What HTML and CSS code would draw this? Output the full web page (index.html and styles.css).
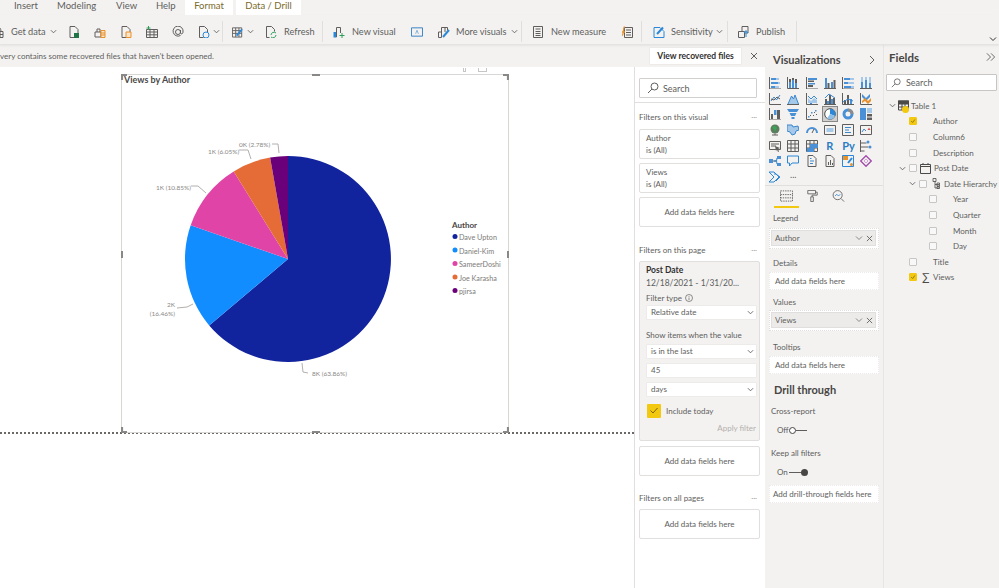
FILE: index.html
```html
<!DOCTYPE html>
<html lang="en">
<head>
<meta charset="utf-8">
<title>Power BI Desktop</title>
<link rel="stylesheet" href="styles.css">
</head>
<body>
<svg class="defs" aria-hidden="true">
  <symbol id="chev" viewBox="0 0 8 8"><path d="M1 2.5 4 5.5 7 2.5" fill="none" stroke="currentColor" stroke-width="1"/></symbol>
  <symbol id="x" viewBox="0 0 8 8"><path d="M1 1 7 7M7 1 1 7" fill="none" stroke="currentColor" stroke-width="1"/></symbol>
  <symbol id="search" viewBox="0 0 12 12"><circle cx="7.5" cy="4.5" r="3.5" fill="none" stroke="currentColor"/><path d="M5 7 1 11" stroke="currentColor" fill="none"/></symbol>
</svg>
<div class="app">
  <nav class="tabs">
    <span class="tab t-insert">Insert</span>
    <span class="tab t-model">Modeling</span>
    <span class="tab t-view">View</span>
    <span class="tab t-help">Help</span>
    <span class="tab active t-format">Format</span>
    <span class="tab active t-drill">Data / Drill</span>
  </nav>
  <div class="toolbar">
    <div class="tgroup g1">
      <svg class="ti" viewBox="0 0 12 12"><path class="g" d="M1 5.5h10v6H1zM1 8.5h10M4.500 5.500v6M8 5.500v6M3 5.500c0-6 6-6 6 0"/></svg>
      <span class="tl w-get">Get data</span>
      <svg class="tc"><use href="#chev"/></svg>
      <div class="iconrow">
        <svg class="ti" viewBox="0 0 12 12"><path class="g" d="M2 .5h5l3 3v8H2z"/><rect x="6" y="7" width="5" height="5" fill="#217346"/></svg>
        <svg class="ti" viewBox="0 0 12 12"><path class="g" d="M1 6h6v5H1zM3 6V3h3v3"/><path class="o" d="M7 4.500h4v7H7zM7 7h4M7 9h4"/></svg>
        <svg class="ti" viewBox="0 0 12 12"><path class="g" d="M2 .5h5l3 3v8H2z"/><path class="o" d="M6 6h5v5.500H6z"/></svg>
        <svg class="ti" viewBox="0 0 12 12"><path class="g" d="M.500 3.500h11v8H.500zM.500 6h11M.500 8.800h11M4 3.500v8M8 3.500v8"/><path d="M2.500 0v4M.500 2h4" stroke="#2f9e5b" fill="none"/></svg>
        <svg class="ti" viewBox="0 0 12 12"><path class="g" d="M8.500 9.500A5 5 0 1 1 11 6c0 2-2 2.500-2.500 1V4M8.500 6A2.500 2.500 0 1 1 3.500 6 2.500 2.500 0 0 1 8.500 6"/></svg>
        <svg class="ti" viewBox="0 0 12 12"><path class="g" d="M1.500.5h5l3 3v3M1.500.5v11h4"/><circle cx="8" cy="9" r="3" fill="none" stroke="#2b88d8"/></svg>
      </div>
      <svg class="tc c-a"><use href="#chev"/></svg>
    </div>
    <div class="tgroup g2">
      <svg class="ti" viewBox="0 0 13 12"><path class="g" d="M.5 1.500h10v10H.5zM.5 4.500h10M.5 7.500h10M4 1.500v10M7.500 1.500v10"/><path d="M5 10 11 3" stroke="#2b88d8" stroke-width="2" fill="none"/></svg>
      <svg class="tc c-b"><use href="#chev"/></svg>
      <svg class="ti refresh" viewBox="0 0 12 12"><path class="g" d="M1.500.5h5l3 3v2M1.500.5v11h3"/><path d="M6 9a3 3 0 0 1 5-2M11 9a3 3 0 0 1-5 2" stroke="#2f9e5b" fill="none"/></svg>
      <span class="tl w-ref">Refresh</span>
    </div>
    <div class="tgroup g3">
      <svg class="ti" viewBox="0 0 12 12"><path d="M.5 6h3v5.500h-3z" fill="#2b88d8"/><path class="g" d="M3.500 11V1.500h4V7"/><path d="M9 7v5M6.500 9.500h5" stroke="#2f9e5b" fill="none"/></svg>
      <span class="tl w-nv">New visual</span>
      <svg class="ti i-tb" viewBox="0 0 13 10"><path d="M.5.500h12v9H.5z" fill="none" stroke="#2b7cc4"/><path d="M5 7 6.500 3 8 7" fill="none" stroke="#7fb2dc"/></svg>
      <svg class="ti i-mv" viewBox="0 0 12 12"><path class="g" d="M.5 6h3v5.500h-3zM3.500 6V1.500h3.500V6M7 1.500h2.500v3"/><path d="M5 11 11 4" stroke="#2b88d8" stroke-width="2" fill="none"/></svg>
      <span class="tl w-mv">More visuals</span>
      <svg class="tc c-c"><use href="#chev"/></svg>
    </div>
    <div class="tgroup g4">
      <svg class="ti" viewBox="0 0 12 12"><path class="g" d="M1.500.5h9v11h-9zM3.500 3h5M3.500 5.500h5M3.500 7.500h5M3.500 9.500h5"/></svg>
      <span class="tl w-nm">New measure</span>
      <svg class="ti i-qm" viewBox="0 0 12 12"><path class="g" d="M3.500 1.500h8v10h-8zM5 4h5M5 6.500h5M5 9h5"/><path d="M1 6h3M3.500.5C2 1 3 9 1 9.500" stroke="#e8912d" stroke-width="1.300" fill="none"/></svg>
    </div>
    <div class="tgroup g5">
      <svg class="ti" viewBox="0 0 12 12"><path d="M1 1.500h6l4 4v6H1z" fill="none" stroke="#2b88d8"/><path d="M4 8 10 1.500" stroke="#2b88d8" stroke-width="2" fill="none"/></svg>
      <span class="tl w-sens">Sensitivity</span>
      <svg class="tc c-d"><use href="#chev"/></svg>
    </div>
    <div class="tgroup g6">
      <svg class="ti" viewBox="0 0 12 12"><path class="g" d="M.5 5.500h6v6h-6zM4 5.500V.5h6v6.500H7"/><path d="M8 11V5M6 7l2-2.500L10 7" stroke="#2b88d8" fill="none"/></svg>
      <span class="tl w-pub">Publish</span>
    </div>
    <svg class="collapse"><use href="#chev"/></svg>
  </div>
  <div class="main">
    <div class="work">
      <div class="notice">
        <span class="notice-text">very contains some recovered files that haven't been opened.</span>
        <button class="notice-btn">View recovered files</button>
        <svg class="notice-x"><use href="#x"/></svg>
      </div>
      <div class="work-body">
        <section class="canvas">
          <div class="page">
            <div class="visual">
              <svg class="chart" viewBox="121 74 388 359" role="img">
                <path d="M288 156A103 103 0 1 1 209.200 325.400L288 259Z" fill="#12239e"/>
                <path d="M209.200 325.400A103 103 0 0 1 190.700 225.200L288 259Z" fill="#118dff"/>
                <path d="M190.700 225.200A103 103 0 0 1 233.700 171.500L288 259Z" fill="#e044a7"/>
                <path d="M233.700 171.500A103 103 0 0 1 270.100 157.600L288 259Z" fill="#e66c37"/>
                <path d="M270.100 157.600A103 103 0 0 1 288 156L288 259Z" fill="#6b007b"/>
                <g class="leader">
                  <path d="M272 144H278L279 153"/>
                  <path d="M239 150H248L251 159"/>
                  <path d="M191 186H198L206 193"/>
                  <path d="M177 308 187 307 193 304"/>
                  <path d="M302 363 303 372 308 373"/>
                </g>
                <g class="labels">
                  <text x="239" y="147">0K (2.78%)</text>
                  <text x="208" y="154">1K (6.05%)</text>
                  <text x="156" y="190">1K (10.85%)</text>
                  <text x="175" y="307" text-anchor="end">2K</text>
                  <text x="175" y="316" text-anchor="end">(16.46%)</text>
                  <text x="312" y="376">8K (63.86%)</text>
                </g>
                <g class="legend">
                  <text class="legend-title" x="452" y="228">Author</text>
                  <circle cx="455" cy="236.500" r="2.500" fill="#12239e"/><text x="459" y="240">Dave Upton</text>
                  <circle cx="455" cy="250" r="2.500" fill="#118dff"/><text x="459" y="254">Daniel-Kim</text>
                  <circle cx="455" cy="263.500" r="2.500" fill="#e044a7"/><text x="459" y="267">SameerDoshi</text>
                  <circle cx="455" cy="277" r="2.500" fill="#e66c37"/><text x="459" y="281">Joe Karasha</text>
                  <circle cx="455" cy="290.500" r="2.500" fill="#6b007b"/><text x="459" y="294">pjirsa</text>
                </g>
              </svg>
              <span class="vtitle">Views by Author</span>
              <i class="h h-tl"></i><i class="h h-tr"></i><i class="h h-bl"></i><i class="h h-br"></i>
              <i class="h h-tm"></i><i class="h h-bm"></i><i class="h h-lm"></i><i class="h h-rm"></i>
              <i class="vh vh-a"></i><i class="vh vh-b"></i>
            </div>
          </div>
        </section>
        <aside class="filters">
          <div class="fsearch"><svg class="si"><use href="#search"/></svg><span>Search</span></div>
          <div class="frule"></div>
          <div class="fhead fh-1"><span>Filters on this visual</span><span class="dots">...</span></div>
          <div class="fcard"><div>Author</div><div>is (All)</div></div>
          <div class="fcard"><div>Views</div><div>is (All)</div></div>
          <div class="fadd">Add data fields here</div>
          <div class="fhead fh-2"><span>Filters on this page</span><span class="dots">...</span></div>
          <div class="fopen">
            <div class="fname">Post Date</div>
            <div class="fdate">12/18/2021 - 1/31/20...</div>
            <div class="flabel fl-a">Filter type <svg class="info" viewBox="0 0 8 8"><circle cx="4" cy="4" r="3.500" fill="none" stroke="currentColor" stroke-width=".7"/><path d="M4 3.500v2.500M4 2v.8" stroke="currentColor" stroke-width=".7"/></svg></div>
            <div class="fsel">Relative date<svg class="fc"><use href="#chev"/></svg></div>
            <div class="flabel fl-b">Show items when the value</div>
            <div class="fsel">is in the last<svg class="fc"><use href="#chev"/></svg></div>
            <div class="fsel mt4">45</div>
            <div class="fsel mt4">days<svg class="fc"><use href="#chev"/></svg></div>
            <div class="finc"><span class="bigcheck"><svg viewBox="0 0 14 13"><path d="M3.500 6.500 6 9l4.500-5" fill="none" stroke="#7a6408"/></svg></span><span>Include today</span></div>
            <div class="fapply">Apply filter</div>
          </div>
          <div class="fadd mt5">Add data fields here</div>
          <div class="fhead fh-3"><span>Filters on all pages</span><span class="dots">...</span></div>
          <div class="fadd">Add data fields here</div>
        </aside>
      </div>
    </div>
    <aside class="viz">
      <header class="vhead"><h2>Visualizations</h2><svg class="vchev" viewBox="0 0 8 10"><path d="M2 1 6 5 2 9" fill="none" stroke="currentColor"/></svg></header>
      <div class="vgrid">
        <svg viewBox="0 0 12 12"><path class="g" d="M.5 0v12H12"/><path class="b" d="M2 1h5v2H2zM2 5h7v2H2zM2 9h4v2H2z"/><path class="l" d="M7 1h3v2H7zM9 5h2v2H9zM6 9h4v2H6z"/></svg>
        <svg viewBox="0 0 12 12"><path class="g" d="M.5 0v11.500H12"/><path class="b" d="M2 5h2v6H2zM5 3h2v8H5zM8 6h2v5H8z"/><path class="d" d="M2 2h2v3H2zM5 1h2v2H5zM8 2h2v4H8z"/></svg>
        <svg viewBox="0 0 12 12"><path class="g" d="M.5 0v12H12"/><path class="b" d="M2 1h9v2H2zM2 6h7v1.500H2z"/><path class="d" d="M2 3.500h6V5H2zM2 8h5v2H2z"/></svg>
        <svg viewBox="0 0 12 12"><path class="g" d="M0 11.500h12"/><path class="b" d="M1 1h2v10H1zM7 5h2v6H7z"/><path class="d" d="M3.500 6h2v5h-2zM9.500 3h2v8h-2z"/></svg>
        <svg viewBox="0 0 12 12"><path class="g" d="M.5 0v12H12"/><path class="b" d="M2 1h6v2H2zM2 5h4v2H2zM2 9h7v2H2z"/><path class="l" d="M8 1h4v2H8zM6 5h6v2H6zM9 9h3v2H9z"/></svg>
        <svg viewBox="0 0 12 12"><path class="g" d="M0 11.500h12"/><path class="b" d="M1 5h2v6H1zM5 3h2v8H5zM9 6h2v5H9z"/><path class="l" d="M1 0h2v5H1zM5 0h2v3H5zM9 0h2v6H9z"/></svg>

        <svg viewBox="0 0 12 12"><path class="g" d="M.5 0v11.500H12"/><path class="bs" d="M2 8 5 4 7.500 7 11 2"/><path class="g" d="M2 6l3 1 3-3 3 2"/></svg>
        <svg viewBox="0 0 12 12"><path class="l" d="M1 11 4.500 3l2 3 1.500-4 3.500 9z"/><path class="bs" d="M1 11 4.500 3l2 3 1.500-4 3.500 9"/><path class="g" d="M0 11.500h12"/></svg>
        <svg viewBox="0 0 12 12"><path class="g" d="M.5 0v11.500H12"/><path class="bs" d="M2 3l3 3 3-3 3 3M2 8l3 3 3-3 3 2"/><path class="l" d="M2 5l3 3 3-3 3 2v3H2z"/></svg>
        <svg viewBox="0 0 12 12"><path class="g" d="M0 11.500h12"/><path class="d" d="M1 6h2v5H1zM5 2h2v9H5zM9 5h2v6H9z"/><path class="b" d="M3 8h2v3H3zM7 6h2v5H7z"/><path class="bs" d="M1 5 5 1l6 4"/></svg>
        <svg viewBox="0 0 12 12"><path class="g" d="M.5 0v11.500H12"/><path class="d" d="M2 7h2v4H2zM5 2h2v9H5z"/><path class="b" d="M8 6h2v5H8z"/><path class="bs" d="M1 9l5-3 5 2"/></svg>
        <svg viewBox="0 0 12 12"><path class="g" d="M.5 0v11.500H12"/><path class="b" d="M2 1l4 4 4-4v3L6 8 2 4z"/><path d="M2 8l3-3 3 3 3-3v3l-3 3-3-3-3 2z" fill="#e8912d"/></svg>

        <svg viewBox="0 0 12 12"><path class="g" d="M.5 0v12H12"/><path class="d" d="M2 6h2v5H2zM8 2h3v9H8z"/><path class="b" d="M5 2h2.500v5H5z"/></svg>
        <svg viewBox="0 0 12 12"><path class="b" d="M0 1h12L10 4H2zM2.500 5h7L8 8H4zM4.500 9h3v2h-3z"/></svg>
        <svg viewBox="0 0 12 12"><path class="g" d="M.5 0v11.500H12"/><path class="b" d="M2 8h1.500v1.500H2zM5 4h1.500v1.500H5zM9 2h1.500v1.500H9z"/><path class="d" d="M4 7h1v1H4zM7 7h1v1H7zM8 4h1v1H8zM10 6h1v1h-1z"/></svg>
        <span class="vsel"><svg viewBox="0 0 12 12"><circle cx="6" cy="6" r="5.300" fill="#fff" stroke="#4b4a48"/><path d="M6 6V.7A5.300 5.300 0 0 1 11 8z" fill="#2b88d8"/><path d="M6 6 11 8A5.300 5.300 0 0 1 3 10.500z" fill="#8fbfe6"/></svg></span>
        <svg viewBox="0 0 12 12"><circle cx="6" cy="6" r="4" fill="none" stroke="#4a90d6" stroke-width="3"/><path d="M6 2a4 4 0 0 1 4 4" fill="none" stroke="#8e8c8a" stroke-width="3"/></svg>
        <svg viewBox="0 0 12 12"><path class="b" d="M0 0h6v12H0z"/><path class="l" d="M7 0h5v5H7z"/><path class="d" d="M7 6h5v2.500H7zM7 9.500h5V12H7z"/></svg>

        <svg viewBox="0 0 12 12"><circle cx="6" cy="5" r="4.500" fill="#5c7d5e"/><path d="M3 3l3-1 2 2-2 3z" fill="#3aa655"/><path class="g" d="M3 11h6M6 9.500V11"/></svg>
        <svg viewBox="0 0 12 12"><path class="l" d="M0 1h5l1 2 5-1 1 4-3 1-1 3-3 1-2-3-3-1z"/><path class="bs" d="M0 1h5l1 2 5-1 1 4-3 1-1 3-3 1-2-3-3-1z"/></svg>
        <svg viewBox="0 0 12 12"><path d="M1 9a5 5 0 0 1 10 0" fill="none" stroke="#4a90d6" stroke-width="2"/><path d="M6 9 8 5" stroke="#605e5c" fill="none"/></svg>
        <svg viewBox="0 0 12 12"><path class="g" d="M.5 1.500h11v9H.5z"/><path class="l" d="M2.500 4h7v4h-7z"/></svg>
        <svg viewBox="0 0 12 12"><path class="g" d="M.5 .5h11v11H.5z"/><path class="bs" d="M3 3.500h6M3 6h4M3 8.500h6"/></svg>
        <svg viewBox="0 0 12 12"><path class="g" d="M.5 1.500h11v9H.5z"/><path class="bs" d="M2 8l2-3 2 2"/><path d="M7.500 6l1.500-2.500L10.500 6z" fill="#d9534f"/></svg>

        <svg viewBox="0 0 12 12"><path class="g" d="M.5 1.500h11v8H.5zM2 4h8M2 6h5"/><path d="M6 6l5 2-2 1 1 2.500-1 .5-1-2.500L7 11z" fill="#605e5c"/></svg>
        <svg viewBox="0 0 12 12"><path class="g" d="M.5 .5h11v11H.5zM.5 4h11M.5 8h11M4 .5v11M8 .5v11"/></svg>
        <svg viewBox="0 0 12 12"><path class="g" d="M.5 .5h11v11H.5zM.5 4h11M.5 8h11M4 .5v11M8 .5v11"/><path class="b" d="M4 4h8v4H4zM1 8h7v4H1z"/></svg>
        <span class="vtxt">R</span>
        <span class="vtxt">Py</span>
        <svg viewBox="0 0 12 12"><path class="g" d="M.5 0v12M.5 3h6M.5 7h8M.5 11h4"/><circle cx="8" cy="2" r="1.500" class="b"/><circle cx="10" cy="7" r="1.500" class="b"/></svg>

        <svg viewBox="0 0 12 12"><path class="b" d="M0 4h4v4H0zM5.500 5h2v2h-2z"/><path class="g" d="M4 6h2"/><path class="b" d="M8 1h4v3H8zM8 8h4v3H8z"/><path class="bs" d="M7.500 6 8 3M7.500 6 8 9"/></svg>
        <svg viewBox="0 0 12 12"><path d="M.5 1h11v7H5L2.500 11V8h-2z" fill="none" stroke="#2b88d8"/></svg>
        <svg viewBox="0 0 12 12"><path class="g" d="M2 .5h5l3 3v8H2z"/><path class="bs" d="M4 6h4M4 8.500h3M4 3.500h1.500"/></svg>
        <svg viewBox="0 0 12 12"><path class="g" d="M2 .5h5l3 3v8H2z"/><path class="d" d="M4 7h1v3H4zM6 5h1v5H6zM8 8h1v2H8z"/></svg>
        <svg viewBox="0 0 12 12"><path d="M.5 .5h11v11H.5z" fill="none" stroke="#2b88d8"/><path d="M1 1h5v4H1z" fill="#e8912d"/><path d="M6 8 10 3" stroke="#2b88d8" stroke-width="2" fill="none"/><circle cx="9.500" cy="9.500" r="1.500" fill="#e8912d"/></svg>
        <svg viewBox="0 0 12 12"><path d="M6 .7 11.300 6 6 11.300.7 6z" fill="none" stroke="#a14aa8" stroke-width="1.300"/><path d="M6 4 8 6 6 8 4 6z" fill="none" stroke="#d4a5d8"/></svg>

        <svg viewBox="0 0 12 12"><path d="M0 1h5l5 5-5 5H0l5-5z" fill="none" stroke="#2b88d8"/><path d="M5 3h2l4 3-4 4" fill="none" stroke="#2b88d8"/></svg>
        <span class="vtxt more">...</span>
      </div>
      <div class="vtabs">
        <span class="vtab active"><svg viewBox="0 0 14 12"><path d="M.5 .5h13v11H.5zM.5 4.500h13M.5 8h13" fill="none" stroke="#605e5c" stroke-dasharray="1.500 1"/></svg></span>
        <span class="vtab v2"><svg viewBox="0 0 12 14"><path d="M.5 .5h9v4h-9zM9.500 2.500h2v3.500h-6v2" fill="none" stroke="#605e5c"/><path d="M4 8h3v5.500H4z" fill="none" stroke="#605e5c"/></svg></span>
        <span class="vtab v3"><svg viewBox="0 0 14 14"><circle cx="6" cy="6" r="5.300" fill="none" stroke="#605e5c"/><path d="M10 10l3.500 3.500" stroke="#605e5c" fill="none"/><path d="M3 7 5 5l2 2 2-2" stroke="#2b88d8" fill="none"/></svg></span>
      </div>
      <div class="vwell vw-1">Legend</div>
      <div class="dropz"><div class="pill"><span>Author</span><svg class="pc"><use href="#chev"/></svg><svg class="px"><use href="#x"/></svg></div></div>
      <div class="vwell vw-2">Details</div>
      <div class="addz">Add data fields here</div>
      <div class="vwell vw-3">Values</div>
      <div class="dropz dz-2"><div class="pill"><span>Views</span><svg class="pc"><use href="#chev"/></svg><svg class="px"><use href="#x"/></svg></div></div>
      <div class="vwell vw-4">Tooltips</div>
      <div class="addz">Add data fields here</div>
      <h3 class="drill">Drill through</h3>
      <div class="optlabel ol-1">Cross-report</div>
      <div class="toggle tg-1"><span>Off</span><i class="ring"></i><i class="track"></i></div>
      <div class="optlabel ol-2">Keep all filters</div>
      <div class="toggle tg-2"><span>On</span><i class="track short"></i><i class="dot"></i></div>
      <div class="addz az-last">Add drill-through fields here</div>
    </aside>
    <aside class="fields">
      <header class="fieldshead"><h2>Fields</h2><svg class="dbl" viewBox="0 0 11 10"><path d="M1 1 5 5 1 9M5.500 1 9.500 5 5.500 9" fill="none" stroke="currentColor"/></svg></header>
      <div class="fieldsearch"><svg class="si"><use href="#search"/></svg><span>Search</span></div>
      <ul class="tree">
        <li class="row root"><svg class="tch"><use href="#chev"/></svg><span class="tblwrap"><svg class="tbl" viewBox="0 0 11 11"><path d="M.5 1h10v9H.5zM.5 4h10M.5 7h10M4 1v9M7 1v9" fill="none" stroke="#4b4a48"/><path d="M0 .5h11V4H0z" fill="#4b4a48"/></svg><i class="badge"></i></span><span class="rootname">Table 1</span></li>
        <li class="row lv1"><i class="cb on"><svg viewBox="0 0 8 8"><path d="M1.500 4 3.500 6l3-4" fill="none" stroke="#7a6408"/></svg></i><span class="nm1">Author</span></li>
        <li class="row lv1"><i class="cb"></i><span class="nm1">Column6</span></li>
        <li class="row lv1"><i class="cb"></i><span class="nm1">Description</span></li>
        <li class="row lv1b"><svg class="tch"><use href="#chev"/></svg><i class="cb cbm"></i><svg class="cal" viewBox="0 0 11 11"><path d="M.5 1.500h10v9H.5zM.5 3.500h10M3 0v2M8 0v2" fill="none" stroke="#4b4a48"/></svg><span>Post Date</span></li>
        <li class="row lv2"><svg class="tch"><use href="#chev"/></svg><i class="cb cbm"></i><svg class="hier" viewBox="0 0 8 11"><path d="M1 .5h3v3H1zM3 3.500v6.500h4M3 6.500h4M5 5h2.500v3H5zM5 8.500h2.500v2H5z" fill="none" stroke="#4b4a48" stroke-width=".8"/></svg><span>Date Hierarchy</span></li>
        <li class="row lv3"><i class="cb"></i><span>Year</span></li>
        <li class="row lv3"><i class="cb"></i><span>Quarter</span></li>
        <li class="row lv3"><i class="cb"></i><span>Month</span></li>
        <li class="row lv3"><i class="cb"></i><span>Day</span></li>
        <li class="row lv1"><i class="cb"></i><span class="nm1">Title</span></li>
        <li class="row lv1"><i class="cb on"><svg viewBox="0 0 8 8"><path d="M1.500 4 3.500 6l3-4" fill="none" stroke="#7a6408"/></svg></i><span class="sigma">∑</span><span>Views</span></li>
      </ul>
    </aside>
  </div>
</div>
</body>
</html>
```
FILE: styles.css
```css
* { box-sizing: border-box; }
html, body { margin: 0; padding: 0; height: 100%; }
body { font-family: Lato, "Open Sans", sans-serif; font-size: 8px; color: #605e5c; background: #f3f2f1; overflow: hidden; }
.defs { position: absolute; width: 0; height: 0; }
h2, h3, ul { margin: 0; padding: 0; }
ul { list-style: none; }
.app { width: 999px; height: 588px; display: flex; flex-direction: column; overflow: hidden; }

/* ribbon tabs */
.tabs { height: 15px; display: flex; background: #f3f2f1; }
.tab { font-size: 9.500px; line-height: 11px; height: 15px; color: #605e5c; white-space: nowrap; }
.tab.active { background: #fff; color: #7a6a2c; text-align: center; }
.t-insert { margin-left: 14px; width: 23px; }
.t-model { margin-left: 20px; width: 39px; }
.t-view { margin-left: 20px; width: 20px; }
.t-help { margin-left: 20px; width: 19px; }
.t-format { margin-left: 10px; width: 48px; }
.t-drill { margin-left: 3px; width: 65px; }

/* toolbar */
.toolbar { height: 30px; display: flex; align-items: center; padding-top: 4px; background: #f3f2f1; border-bottom: 1px solid #e6e4e2; box-shadow: 0 1px 2px rgba(0,0,0,.06); position: relative; z-index: 2; }
.tgroup { height: 21px; display: flex; align-items: center; border-right: 1px solid #e1dfdd; flex: none; }
.g1 { width: 231px; margin-left: -8px; }
.g2 { width: 100px; padding-left: 9px; }
.g3 { width: 199px; padding-left: 10px; }
.g4 { width: 120px; padding-left: 10px; }
.g5 { width: 86px; padding-left: 11px; }
.g6 { width: 69px; padding-left: 10px; }
.ti { width: 12px; height: 12px; flex: none; }
.tc { width: 7px; height: 7px; flex: none; color: #605e5c; margin-left: 5px; }
.tl { font-size: 9.200px; white-space: nowrap; flex: none; margin-left: 7px; }
.w-get { width: 34px; }
.w-ref { width: 30px; }
.w-nv { width: 44px; }
.w-mv { width: 50px; margin-left: 6px; }
.w-nm { width: 56px; }
.w-sens { width: 40px; margin-left: 6px; }
.w-pub { width: 30px; margin-left: 6px; }
.iconrow { width: 142px; margin-left: 11px; display: flex; justify-content: space-between; flex: none; }
.c-a { margin-left: 3px; }
.c-b { margin-left: 3px; }
.refresh { margin-left: 11px; }
.i-tb { margin-left: 15px; }
.i-mv { margin-left: 15px; }
.i-qm { margin-left: 14px; }
.collapse { position: absolute; right: 2px; bottom: 1px; width: 8px; height: 8px; color: #323130; }
.ti .g, .vgrid .g { fill: none; stroke: #605e5c; }
.ti .o { fill: #fbe3c6; stroke: #e8912d; }
.vgrid .b { fill: #4a90d6; }
.vgrid .d { fill: #605e5c; }
.vgrid .l { fill: #a6c9ea; }
.vgrid .bs { fill: none; stroke: #3a87cf; }

/* main regions */
.main { flex: 1; display: flex; min-height: 0; }
.work { width: 765px; flex: none; display: flex; flex-direction: column; }
.notice { height: 22px; flex: none; display: flex; align-items: center; background: #f3f2f1; }
.notice-text { font-size: 8px; width: 649px; white-space: nowrap; flex: none; }
.notice-btn { width: 93px; height: 18px; padding: 0; border: 1px solid #edebe9; border-radius: 1px; background: #fff; color: #323130; font: 700 8.500px Lato, sans-serif; flex: none; }
.notice-x { width: 8px; height: 8px; margin-left: 8px; color: #605e5c; flex: none; }
.work-body { flex: 1; display: flex; min-height: 0; }

/* canvas */
.canvas { width: 635px; flex: none; background: #fff; border-right: 1px solid #e1dfdd; }
.page { height: 367px; padding: 7px 0 0 121px; border-bottom: 2px dotted #6b6967; }
.visual { position: relative; width: 388px; height: 359px; border: 1px solid #d9d7d5; }
.chart { position: absolute; left: -1px; top: -1px; width: 388px; height: 359px; }
.leader path { fill: none; stroke: #b3b0ad; stroke-width: 1; }
.labels text { font-size: 6.500px; fill: #8a8886; }
.legend text { font-size: 7.200px; fill: #7d7b79; }
.legend .legend-title { font-weight: 700; font-size: 8px; fill: #484644; }
.vtitle { position: absolute; left: 2px; top: -1px; font-size: 9px; font-weight: 700; color: #4b4a48; white-space: nowrap; }
.h { position: absolute; background: #8a8886; }
.h-tl, .h-tr, .h-bl, .h-br { width: 6px; height: 6px; }
.h-tl { left: -1px; top: -1px; clip-path: polygon(0 0,100% 0,100% 35%,35% 35%,35% 100%,0 100%); }
.h-tr { right: -1px; top: -1px; clip-path: polygon(0 0,100% 0,100% 100%,65% 100%,65% 35%,0 35%); }
.h-bl { left: -1px; bottom: -1px; clip-path: polygon(0 0,35% 0,35% 65%,100% 65%,100% 100%,0 100%); }
.h-br { right: -1px; bottom: -1px; clip-path: polygon(65% 0,100% 0,100% 100%,0 100%,0 65%,65% 65%); }
.h-tm { left: 190px; top: -1px; width: 8px; height: 2px; }
.h-bm { left: 190px; bottom: -1px; width: 8px; height: 2px; }
.h-lm { left: -1px; top: 176px; width: 2px; height: 7px; }
.h-rm { right: -1px; top: 176px; width: 2px; height: 7px; }
.vh { position: absolute; top: -7px; height: 4px; border: 1px solid #c8c6c4; border-top: 0; }
.vh-a { left: 341px; width: 3px; }
.vh-b { left: 356px; width: 9px; }

/* filters pane */
.filters { width: 130px; flex: none; background: #fff; padding: 11px 0 0 4px; }
.fsearch { width: 118px; height: 20px; border: 1px solid #d2d0ce; border-radius: 1px; display: flex; align-items: center; padding-left: 7px; font-size: 9px; gap: 4px; }
.si { width: 12px; height: 12px; color: #605e5c; flex: none; }
.frule { height: 1px; background: #e1dfdd; margin: 4px 0 0 -4px; }
.fhead { width: 118px; display: flex; justify-content: space-between; font-size: 8px; line-height: 12px; }
.fh-1 { margin-top: 8px; margin-bottom: 6px; }
.fh-2 { margin-top: 17px; margin-bottom: 5px; }
.fh-3 { margin-top: 16px; margin-bottom: 5px; }
.dots { color: #8a8886; line-height: 8px; }
.fcard { width: 121px; height: 30px; border: 1px solid #e1dfdd; border-radius: 2px; padding: 2px 6px; font-size: 8px; line-height: 12px; margin-bottom: 4px; }
.fadd { width: 121px; height: 30px; border: 1px solid #e1dfdd; border-radius: 2px; font-size: 8px; line-height: 28px; text-align: center; }
.fopen { width: 121px; height: 180px; border: 1px solid #e1dfdd; border-radius: 2px; background: #f3f2f1; padding: 2px 2px 0 6px; }
.fname { font-size: 8.500px; font-weight: 700; color: #323130; line-height: 13px; }
.fdate { font-size: 8.500px; line-height: 12px; white-space: nowrap; }
.flabel { font-size: 8px; line-height: 12px; display: flex; align-items: center; gap: 3px; }
.fl-a { margin-top: 3px; margin-bottom: 1px; }
.fl-b { margin-top: 9px; margin-bottom: 3px; }
.info { width: 8px; height: 8px; }
.fsel { width: 111px; height: 15px; background: #fff; border: 1px solid #edebe9; border-radius: 1px; font-size: 8px; line-height: 13px; padding-left: 4px; position: relative; }
.fc { position: absolute; right: 2px; top: 3px; width: 7px; height: 7px; color: #605e5c; }
.mt4 { margin-top: 4px; }
.mt5 { margin-top: 5px; }
.finc { display: flex; align-items: center; gap: 5px; margin-top: 7px; font-size: 8px; }
.bigcheck { width: 14px; height: 14px; background: #f2c811; border-radius: 1px; margin-left: 1px; display: block; }
.bigcheck svg { display: block; width: 14px; height: 13px; }
.fapply { text-align: right; color: #b3b0ad; font-size: 8px; line-height: 11px; margin-top: 5px; padding-right: 1px; }

/* visualizations pane */
.viz { width: 118px; flex: none; background: #f3f2f1; position: relative; display: flex; flex-direction: column; }
.vhead { height: 32px; display: flex; align-items: center; justify-content: space-between; padding: 0 7px 3px 8px; }
.vhead h2 { font-size: 11px; font-weight: 700; color: #484644; line-height: 16px; }
.vchev { width: 8px; height: 10px; color: #605e5c; }
.vgrid { display: grid; grid-template-columns: repeat(6, 12px); grid-auto-rows: 12px; column-gap: 6.300px; row-gap: 3.700px; padding: 0 0 0 4px; }
.vgrid svg { width: 12px; height: 12px; display: block; }
.vsel { display: block; width: 12px; height: 12px; box-shadow: 0 0 0 1px #d2d0ce, 0 0 0 2px #8a8886; background: #d2d0ce; }
.vtxt { font-size: 11px; line-height: 12px; font-weight: 700; color: #2b7cc4; text-align: center; white-space: nowrap; }
.vtxt.more { color: #605e5c; font-weight: 400; font-size: 9px; line-height: 7px; }
.vtabs { margin-top: 2px; border-top: 1px solid #e1dfdd; height: 24px; display: flex; padding: 4px 0 0 9px; flex: none; }
.vtab { display: block; height: 18px; }
.vtab svg { display: block; width: 13px; height: 12px; }
.vtab.active { width: 25px; padding-left: 6px; border-bottom: 2px solid #f2c811; height: 18px; }
.v2 { margin-left: 7px; }
.v3 { margin-left: 13px; }
.vwell { font-size: 8px; line-height: 12px; padding-left: 8px; }
.vw-1 { margin-top: 3px; margin-bottom: 4px; }
.vw-2 { margin-top: 8px; margin-bottom: 3px; }
.vw-3 { margin-top: 6px; margin-bottom: 2px; }
.vw-4 { margin-top: 10px; margin-bottom: 3px; }
.dropz { width: 110px; height: 21px; margin-left: 4px; padding: 1px 2px 1px 1px; background: #fff; border: 1px dotted #e1dfdd; flex: none; }
.dz-2 { height: 21px; }
.pill { height: 16px; background: #edebe9; border: 1px solid #e1dfdd; display: flex; align-items: center; padding: 0 2px 0 3px; font-size: 8px; }
.pill span { flex: 1; }
.pc { width: 8px; height: 8px; color: #8a8886; }
.px { width: 7px; height: 7px; color: #605e5c; margin-left: 3px; }
.addz { width: 110px; height: 18px; margin-left: 4px; background: #fff; border: 1px dotted #edebe9; font-size: 8px; line-height: 16px; padding-left: 5px; white-space: nowrap; flex: none; }
.drill { font-size: 11px; font-weight: 700; color: #484644; margin: 8px 0 0 9px; line-height: 16px; }
.optlabel { font-size: 8px; line-height: 12px; padding-left: 6px; }
.ol-1 { margin-top: 7px; }
.ol-2 { margin-top: 11px; }
.toggle { display: flex; align-items: center; height: 12px; padding-left: 12px; font-size: 8px; }
.toggle span { width: 10px; }
.tg-1 { margin-top: 7px; }
.tg-2 { margin-top: 7px; }
.ring { width: 7px; height: 7px; border: 1.500px solid #484644; border-radius: 50%; margin-left: 2px; background: #fff; display: block; }
.track { width: 11px; height: 1px; background: #605e5c; display: block; }
.track.short { width: 12px; margin-left: 2px; }
.dot { width: 7px; height: 7px; border-radius: 50%; background: #484644; display: block; }
.az-last { margin-top: 7px; padding-left: 3px; }

/* fields pane */
.fields { width: 116px; flex: none; background: #f3f2f1; border-left: 1px solid #e8e6e4; }
.fieldshead { height: 24px; display: flex; align-items: center; justify-content: space-between; padding: 0 3px 0 5px; margin-bottom: 5px; }
.fieldshead h2 { font-size: 11.500px; font-weight: 700; color: #484644; }
.dbl { width: 10px; height: 10px; color: #605e5c; }
.fieldsearch { width: 111px; height: 17px; margin-left: 2px; background: #fff; border: 1px solid #c8c6c4; border-radius: 1px; display: flex; align-items: center; padding-left: 4px; font-size: 9px; gap: 5px; }
.fieldsearch .si { width: 10px; height: 10px; }
.tree { margin-top: 7px; font-size: 8px; }
.row { height: 15.600px; display: flex; align-items: center; white-space: nowrap; }
.root { padding-left: 5px; }
.lv1 { padding-left: 25px; }
.lv1b { padding-left: 15px; }
.lv2 { padding-left: 25px; }
.lv3 { padding-left: 45px; }
.tch { width: 7px; height: 7px; color: #605e5c; flex: none; }
.tblwrap { position: relative; width: 11px; height: 11px; margin-left: 2px; flex: none; }
.tbl { width: 11px; height: 11px; display: block; }
.badge { position: absolute; left: 4px; top: 6px; width: 7px; height: 7px; border-radius: 50%; background: #f2c811; }
.rootname { margin-left: 2px; }
.cb { width: 8px; height: 8px; border: 1px solid #c8c6c4; border-radius: 1px; background: #f8f8f8; display: block; flex: none; }
.cb.on { background: #f2c811; border-color: #f2c811; }
.cb svg { display: block; width: 6px; height: 6px; }
.cbm { margin-left: 3px; }
.lv1 .nm1 { margin-left: 16px; }
.cal { width: 11px; height: 11px; margin: 0 3px; flex: none; }
.hier { width: 8px; height: 11px; margin: 0 4px 0 5px; flex: none; }
.lv3 span { margin-left: 16px; }
.sigma { width: 8px; margin: 0 3px 0 5px; font-size: 11px; line-height: 12px; color: #4b4a48; }
```
